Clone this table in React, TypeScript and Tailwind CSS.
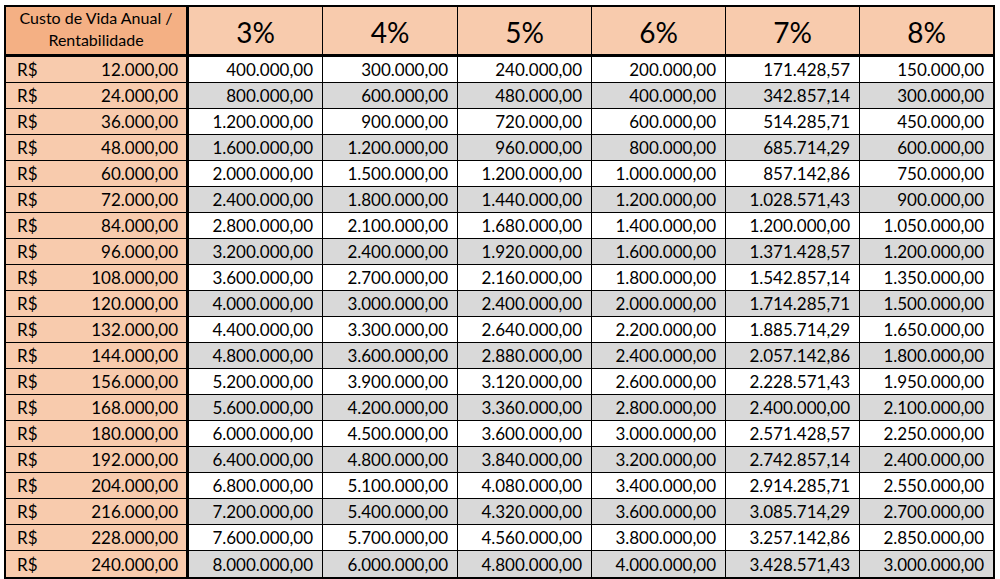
const rates = [3, 4, 5, 6, 7, 8];

// widths of the six rate columns (incl. right border)
const colW = ["w-[134px]", "w-[135px]", "w-[134px]", "w-[134px]", "w-[134px]", "w-[133px]"];

// pt-BR number format, 2 decimals
function brl(n: number) {
    const fixed = (Math.round(n * 100) / 100).toFixed(2);
    const [int, dec] = fixed.split(".");
    return int.replace(/\B(?=(\d{3})+(?!\d))/g, ".") + "," + dec;
}

const costs = Array.from({ length: 20 }, (_, i) => 12000 * (i + 1));

export default function App() {
    return (
        <div className="w-[1000px] h-[579px] bg-white pt-[5px] pl-[4px] font-['Lato',sans-serif] text-black">
            <div className="w-[991px] border-2 border-black">
                {/* Header */}
                <div className="flex h-[50px] border-b-[3px] border-black bg-[#f8cbad]">
                    <div className="w-[183px] shrink-0 border-r-[3px] border-black bg-[#f4b084] flex flex-col items-center justify-center text-[16px] leading-[22px] pb-[3px]">
                        <span>Custo de Vida Anual /</span>
                        <span>Rentabilidade</span>
                    </div>
                    {rates.map((r, i) => (
                        <div
                            key={r}
                            className={`${colW[i]} shrink-0 flex items-center justify-center text-[28px] pt-[2px] ${
                                i < 5 ? "border-r border-black" : ""
                            }`}
                        >
                            {r}%
                        </div>
                    ))}
                </div>

                {/* Body rows */}
                {costs.map((c, idx) => (
                    <div
                        key={c}
                        className={`flex h-[26px] text-[17px] leading-none ${
                            idx < costs.length - 1 ? "border-b border-black" : "h-[25px]"
                        } ${idx % 2 === 1 ? "bg-[#d9d9d9]" : "bg-white"}`}
                    >
                        <div className="w-[183px] shrink-0 border-r-[3px] border-black bg-[#f8cbad] flex items-center justify-between pl-[11px] pr-[8px]">
                            <span>R$</span>
                            <span>{brl(c)}</span>
                        </div>
                        {rates.map((r, i) => (
                            <div
                                key={r}
                                className={`${colW[i]} shrink-0 flex items-center justify-end pr-[9px] ${
                                    i < 5 ? "border-r border-black" : ""
                                }`}
                            >
                                {brl(c / (r / 100))}
                            </div>
                        ))}
                    </div>
                ))}
            </div>
        </div>
    );
}
